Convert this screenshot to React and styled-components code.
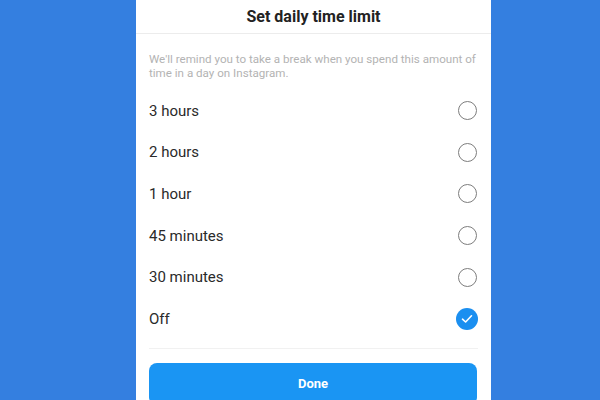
import React, { useState } from "react"
import styled, { createGlobalStyle } from "styled-components"

const options = ["3 hours", "2 hours", "1 hour", "45 minutes", "30 minutes", "Off"]

const App = () => {
  const [selected, setSelected] = useState("Off")

  return (
    <>
      <GlobalStyle />
      <Backdrop>
        <Sheet>
          <SheetHeader>Set daily time limit</SheetHeader>
          <Description>
            We'll remind you to take a break when you spend this amount of
            time in a day on Instagram.
          </Description>
          <OptionList>
            {options.map((label) => (
              <OptionRow key={label} onClick={() => setSelected(label)}>
                <OptionLabel>{label}</OptionLabel>
                <Radio checked={selected === label}>
                  {selected === label && (
                    <svg width="12" height="10" viewBox="0 0 12 10">
                      <path
                        d="M1.5 5.2 L4.6 8 L10.5 1.8"
                        fill="none"
                        stroke="#fff"
                        strokeWidth="1.6"
                        strokeLinecap="round"
                        strokeLinejoin="round"
                      />
                    </svg>
                  )}
                </Radio>
              </OptionRow>
            ))}
          </OptionList>
          <Divider />
          <DoneButton>Done</DoneButton>
        </Sheet>
      </Backdrop>
    </>
  )
}

export default App

const GlobalStyle = createGlobalStyle`
  html, body {
    margin: 0;
    padding: 0;
    height: 100%;
    background: #347fe0;
    font-family: Roboto, "Liberation Sans", Arial, sans-serif;
  }
`

const Backdrop = styled.div`
  width: 600px;
  height: 400px;
  overflow: hidden;
  background: #347fe0;
  display: flex;
`

const Sheet = styled.div`
  margin-left: 136px;
  width: 355px;
  height: 420px;
  background: #fff;
  display: flex;
  flex-direction: column;
`

const SheetHeader = styled.div`
  height: 33px;
  border-bottom: 1px solid #ececec;
  display: flex;
  align-items: center;
  justify-content: center;
  font-size: 16px;
  font-weight: 700;
  color: #222;
`

const Description = styled.p`
  margin: 0;
  padding: 18px 10px 0 13px;
  font-size: 11.6px;
  line-height: 14px;
  color: #b3b3b3;
`

const OptionList = styled.div`
  margin-top: 10px;
  display: flex;
  flex-direction: column;
`

const OptionRow = styled.div`
  height: 41.6px;
  padding: 0 13px 0 13px;
  display: flex;
  align-items: center;
  justify-content: space-between;
  cursor: pointer;
`

const OptionLabel = styled.span`
  font-size: 15px;
  color: #2a2a2a;
`

const Radio = styled.span`
  width: ${(p) => (p.checked ? "22px" : "19px")};
  height: ${(p) => (p.checked ? "22px" : "19px")};
  margin-right: ${(p) => (p.checked ? "0" : "1.5px")};
  box-sizing: border-box;
  border-radius: 50%;
  border: ${(p) => (p.checked ? "none" : "1.6px solid #7d7d7d")};
  background: ${(p) => (p.checked ? "#1b8ff0" : "transparent")};
  display: flex;
  align-items: center;
  justify-content: center;
`

const Divider = styled.div`
  margin: 8px 13px 0 13px;
  height: 1px;
  background: #f1f1f1;
`

const DoneButton = styled.button`
  margin: 14px 14px 0 13px;
  height: 42px;
  border: none;
  border-radius: 8px;
  background: #1a95f3;
  color: #fff;
  font-family: inherit;
  font-size: 13px;
  font-weight: 700;
  cursor: pointer;
`
